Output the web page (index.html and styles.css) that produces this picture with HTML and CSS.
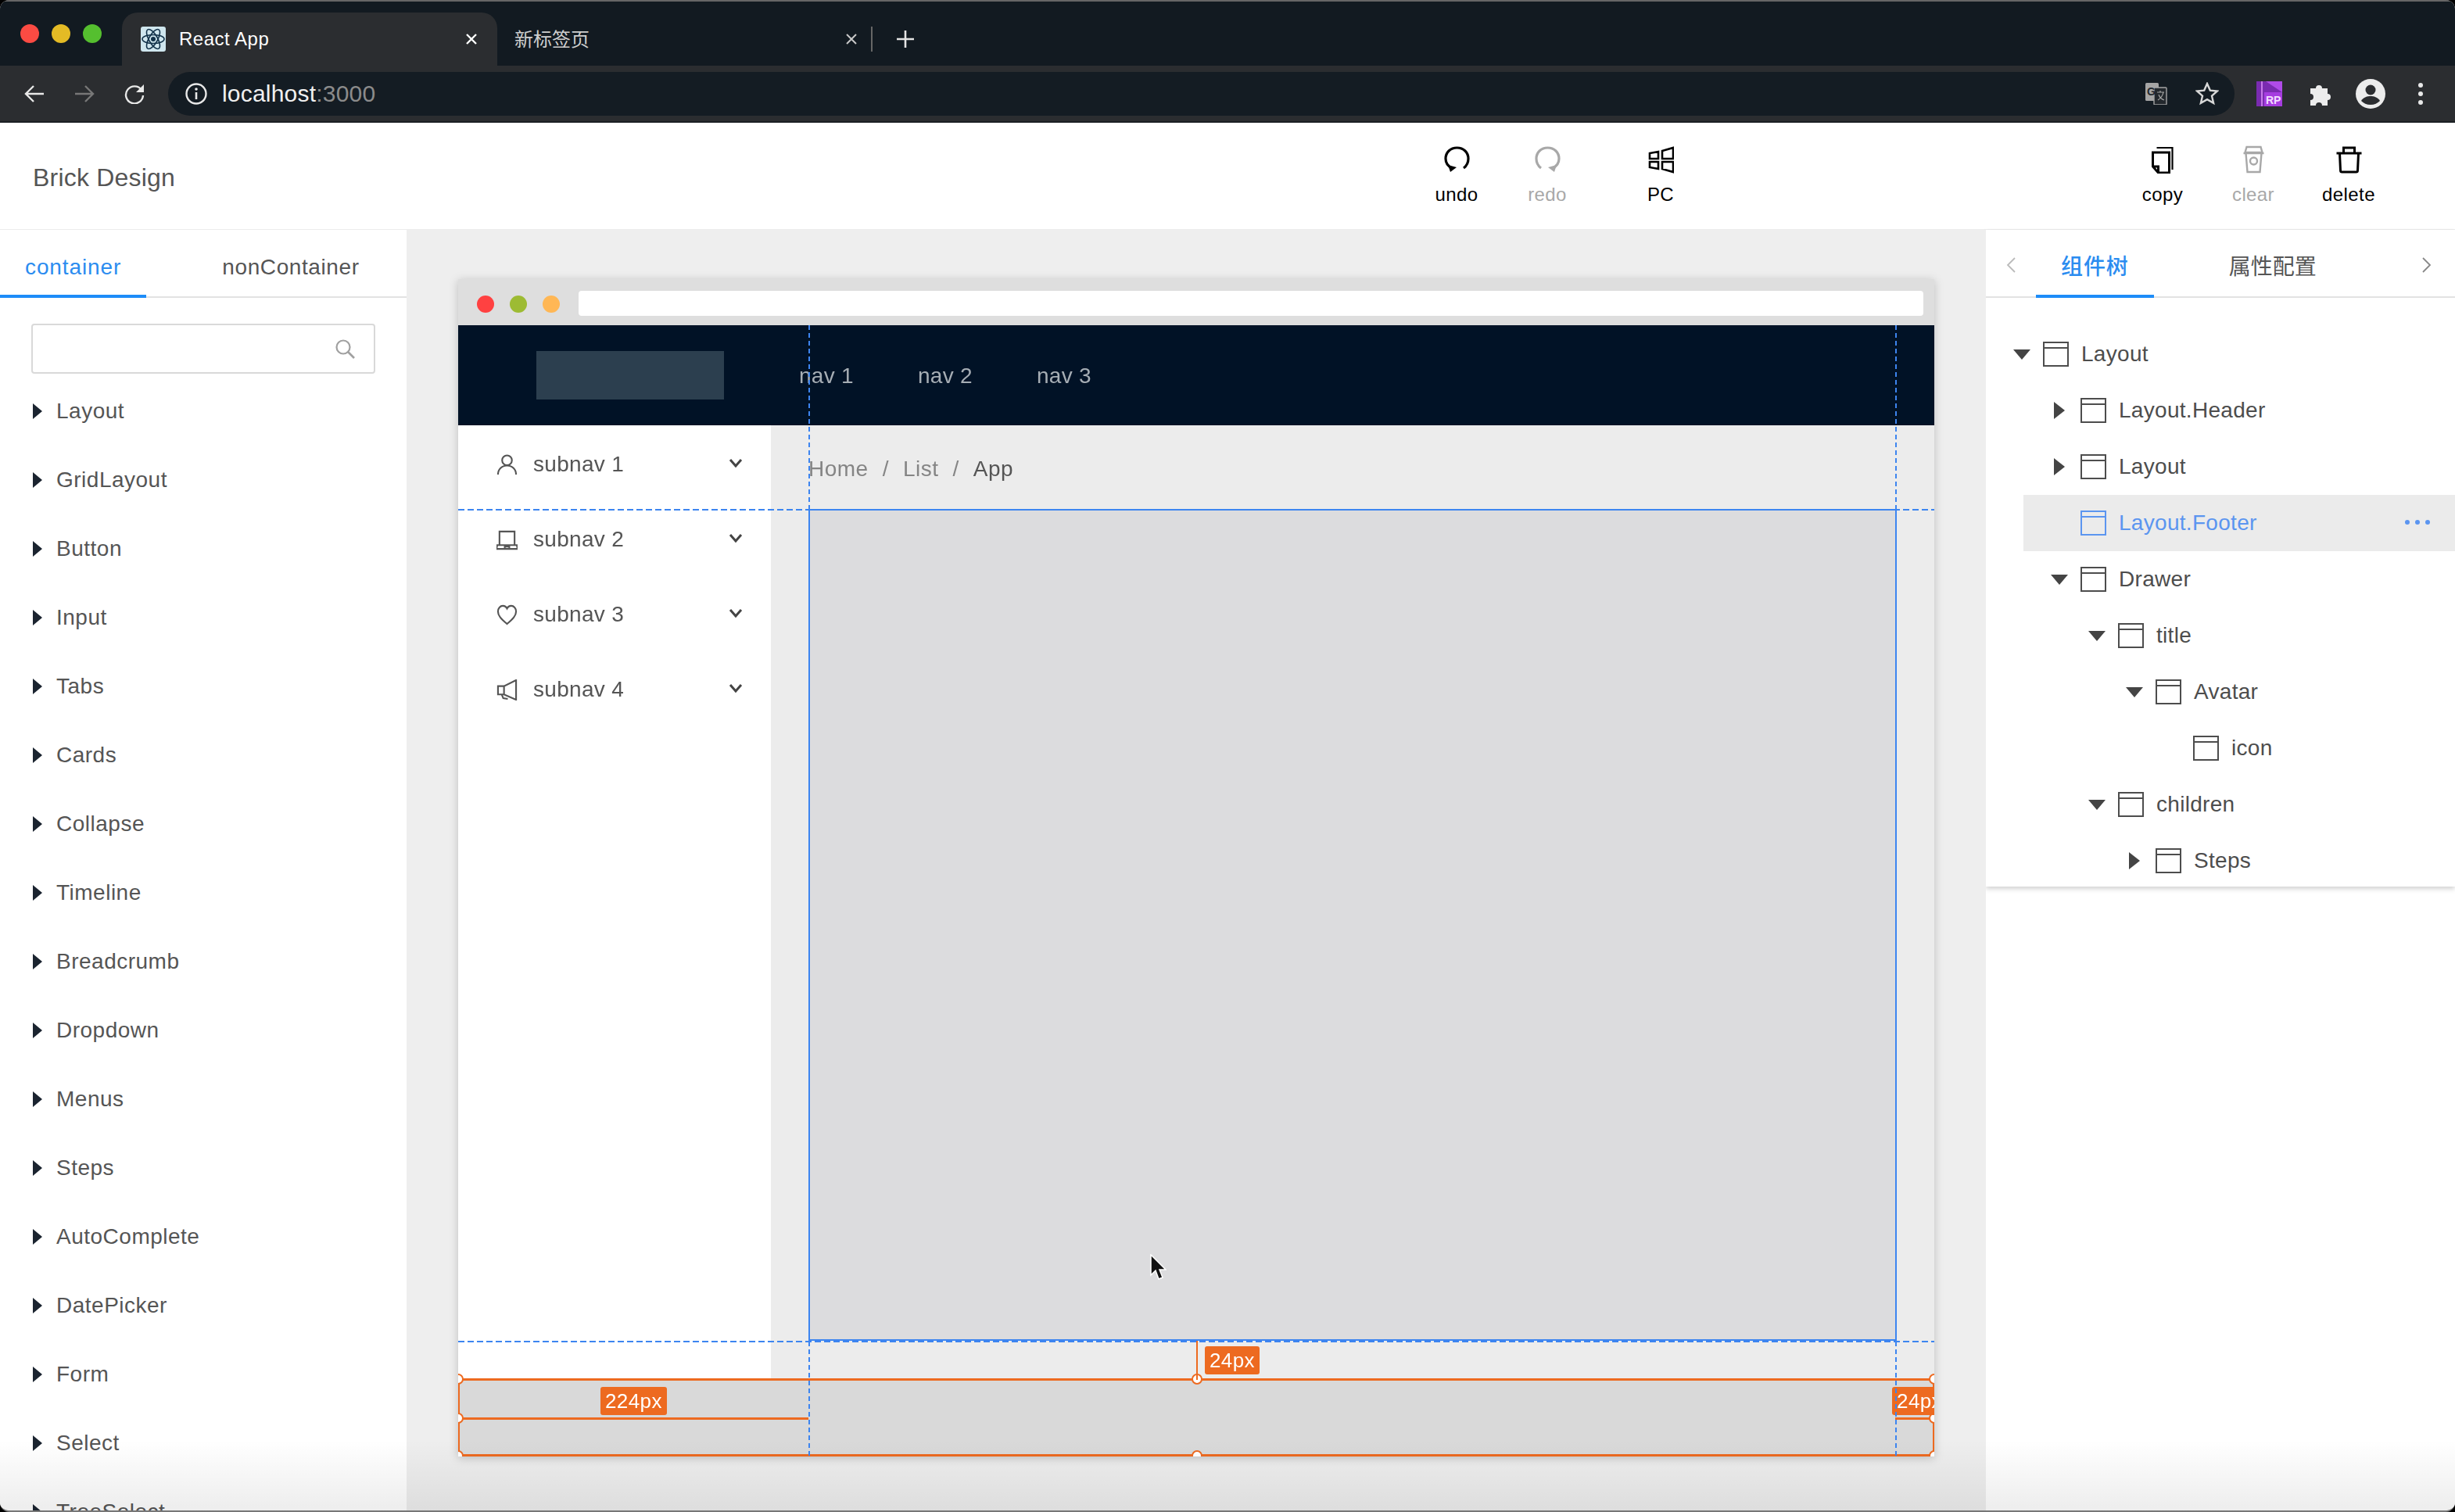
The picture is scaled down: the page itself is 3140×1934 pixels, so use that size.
FILE: index.html
```html
<!DOCTYPE html>
<html lang="en">
<head>
  <meta charset="UTF-8" />
  <title>React App</title>
  <link rel="stylesheet" href="styles.css">
</head>
<body>
  <svg class="defs" width="0" height="0">
    <symbol id="node" viewBox="0 0 33 32">
      <rect x="1" y="1" width="31" height="30" fill="none" stroke="currentColor" stroke-width="2"/>
      <path d="M1 8h31" fill="none" stroke="currentColor" stroke-width="2"/>
    </symbol>
    <symbol id="chev" viewBox="0 0 18 12">
      <path d="M2 2l7 8 7-8" fill="none" stroke="currentColor" stroke-width="3"/>
    </symbol>
  </svg>

  <div class="screen">
    <!-- Browser chrome -->
    <div class="tabstrip">
      <div class="lights">
        <span class="light red"></span>
        <span class="light yellow"></span>
        <span class="light green"></span>
      </div>
      <div class="tab active">
        <svg class="favicon" viewBox="0 0 32 32">
          <rect width="32" height="32" rx="3" fill="#cfe6ee"/>
          <g fill="none" stroke="#12324a" stroke-width="1.6">
            <ellipse cx="16" cy="16" rx="14" ry="5.5"/>
            <ellipse cx="16" cy="16" rx="14" ry="5.5" transform="rotate(60 16 16)"/>
            <ellipse cx="16" cy="16" rx="14" ry="5.5" transform="rotate(120 16 16)"/>
          </g>
          <circle cx="16" cy="16" r="3" fill="#12324a"/>
        </svg>
        <span class="tab-title">React App</span>
        <svg class="tab-close" viewBox="0 0 14 14"><path d="M1 1l12 12M13 1L1 13" stroke="#fff" stroke-width="2.4"/></svg>
      </div>
      <div class="tab">
        <span class="tab-title cjk">新标签页</span>
        <svg class="tab-close" viewBox="0 0 14 14"><path d="M1 1l12 12M13 1L1 13" stroke="#c8c8c8" stroke-width="2"/></svg>
      </div>
      <span class="tab-divider"></span>
      <svg class="tab-plus" viewBox="0 0 22 22"><path d="M11 0v22M0 11h22" stroke="#e4e4e4" stroke-width="2.6"/></svg>
    </div>

    <div class="toolbar">
      <svg class="nav-btn" viewBox="0 0 26 26"><path d="M25 13H3M12 3L2 13l10 10" fill="none" stroke="#e8e8e8" stroke-width="2.4"/></svg>
      <svg class="nav-btn" viewBox="0 0 26 26"><path d="M1 13h22M14 3l10 10-10 10" fill="none" stroke="#777" stroke-width="2.4"/></svg>
      <svg class="nav-btn" viewBox="0 0 26 26"><path d="M22 8a11 11 0 1 0 2 7" fill="none" stroke="#e8e8e8" stroke-width="2.4"/><path d="M25 1v10H15z" fill="#e8e8e8"/></svg>
      <div class="omnibox">
        <svg class="info" viewBox="0 0 28 28">
          <circle cx="14" cy="14" r="12.5" fill="none" stroke="#e8e8e8" stroke-width="2.4"/>
          <path d="M14 12v9" stroke="#e8e8e8" stroke-width="2.6"/>
          <circle cx="14" cy="8" r="1.8" fill="#e8e8e8"/>
        </svg>
        <span class="url">localhost<span class="url-port">:3000</span></span>
        <svg class="translate" viewBox="0 0 28 28">
          <rect x="0" y="0" width="17" height="23" rx="1.5" fill="#a5a5a5"/>
          <rect x="11" y="6" width="16" height="22" rx="1" fill="#23282d" stroke="#a5a5a5" stroke-width="1.4"/>
          <text x="2" y="16" class="translate-g">G</text>
          <path d="M15 12h9M19 10v2M23 12c-1 5-4 8-7 10M17 15c1 3 4 6 7 7" fill="none" stroke="#a5a5a5" stroke-width="1.2"/>
        </svg>
        <svg class="star" viewBox="0 0 30 30"><path d="M15 2l3.8 8.6 9.2.9-7 6.2 2.1 9.2-8.100-4.800-8.100 4.800 2.100-9.200-7-6.200 9.200-.9z" fill="none" stroke="#d8d8d8" stroke-width="2.4"/></svg>
      </div>
      <svg class="ext-rp" viewBox="0 0 33 32">
        <rect width="33" height="32" fill="#7a2bb0"/>
        <rect x="6" y="0" width="2" height="32" fill="#c77ae8"/>
        <path d="M12 0h21v14z" fill="#b04be8"/>
        <rect x="10" y="14" width="23" height="18" fill="#a63ce0"/>
        <text x="12" y="29" class="ext-rp-text">RP</text>
      </svg>
      <svg class="ext-puzzle" viewBox="0 0 30 30">
        <path d="M2 8h7a4 4 0 1 1 8 0h7v7a4 4 0 1 1 0 8v7h-7a4 4 0 0 0-8 0H2v-7a4 4 0 0 0 0-8z" fill="#ececec"/>
      </svg>
      <svg class="avatar" viewBox="0 0 38 38">
        <circle cx="19" cy="19" r="19" fill="#ececec"/>
        <circle cx="19" cy="14" r="6.500" fill="#2b2d30"/>
        <path d="M7 28c3-5 8-6 12-6s9 1 12 6c-3 3-7 5-12 5s-9-2-12-5z" fill="#2b2d30"/>
      </svg>
      <div class="menu-dots"><i></i><i></i><i></i></div>
    </div>

    <!-- App header -->
    <div class="app-header">
      <div class="brand">Brick Design</div>
      <div class="tools">
        <div class="tool">
          <svg class="tool-icon" viewBox="0 0 33 34">
            <path d="M10 28C4 25 2 20 2 16 2 8 8 2 16.500 2S31 8 31 16c0 5-2 9-6 12" fill="none" stroke="currentColor" stroke-width="3.200"/>
            <path d="M5 24l11 3-8 6z" fill="currentColor"/>
          </svg>
          <span>undo</span>
        </div>
        <div class="tool off">
          <svg class="tool-icon" viewBox="0 0 33 34">
            <path d="M23 28c6-3 8-8 8-12 0-8-6-14-14.500-14S2 8 2 16c0 5 2 9 6 12" fill="none" stroke="currentColor" stroke-width="3.200"/>
            <path d="M28 24l-11 3 8 6z" fill="currentColor"/>
          </svg>
          <span>redo</span>
        </div>
        <div class="tool pc">
          <svg class="tool-icon" viewBox="0 0 33 34">
            <path d="M2 9l11-2v9H2zM18 6l14-4v14H18zM2 20h11v9L2 27zM18 20h14v13l-14-4z" fill="none" stroke="currentColor" stroke-width="2.600"/>
          </svg>
          <span>PC</span>
        </div>
      </div>
      <div class="tools right">
        <div class="tool">
          <svg class="tool-icon" viewBox="0 0 30 36">
            <path d="M2 9h21v26H9l-7-8zM2 27h7v8" fill="none" stroke="currentColor" stroke-width="3"/>
            <path d="M7 3h20v28" fill="none" stroke="currentColor" stroke-width="2.200"/>
          </svg>
          <span>copy</span>
        </div>
        <div class="tool off">
          <svg class="tool-icon" viewBox="0 0 30 36">
            <path d="M6 2h18l2 7H4zM2 10h26M5 10l2 24h16l2-24" fill="none" stroke="currentColor" stroke-width="2.400"/>
            <circle cx="15" cy="20" r="4.500" fill="none" stroke="currentColor" stroke-width="2.400"/>
          </svg>
          <span>clear</span>
        </div>
        <div class="tool trash">
          <svg class="tool-icon" viewBox="0 0 32 36">
            <path d="M0 10h32M9 9V3h14v6M4 10l1 22a2 2 0 0 0 2 2h18a2 2 0 0 0 2-2l1-22" fill="none" stroke="currentColor" stroke-width="3"/>
          </svg>
          <span>delete</span>
        </div>
      </div>
    </div>

    <div class="workspace">
      <!-- Left panel -->
      <div class="left-panel">
        <div class="tabs">
          <div class="panel-tab selected">container</div>
          <div class="panel-tab second">nonContainer</div>
        </div>
        <div class="search-wrap">
          <div class="search">
            <svg class="search-icon" viewBox="0 0 26 26"><circle cx="11" cy="11" r="8.500" fill="none" stroke="#a0a0a0" stroke-width="2.200"/><path d="M17 17l8 8" stroke="#a0a0a0" stroke-width="2.600"/></svg>
          </div>
        </div>
        <div class="comp-item">Layout</div>
        <div class="comp-item">GridLayout</div>
        <div class="comp-item">Button</div>
        <div class="comp-item">Input</div>
        <div class="comp-item">Tabs</div>
        <div class="comp-item">Cards</div>
        <div class="comp-item">Collapse</div>
        <div class="comp-item">Timeline</div>
        <div class="comp-item">Breadcrumb</div>
        <div class="comp-item">Dropdown</div>
        <div class="comp-item">Menus</div>
        <div class="comp-item">Steps</div>
        <div class="comp-item">AutoComplete</div>
        <div class="comp-item">DatePicker</div>
        <div class="comp-item">Form</div>
        <div class="comp-item">Select</div>
        <div class="comp-item">TreeSelect</div>
      </div>

      <!-- Canvas -->
      <div class="canvas">
        <div class="preview">
          <div class="preview-bar">
            <span class="dot d-red"></span>
            <span class="dot d-green"></span>
            <span class="dot d-orange"></span>
            <div class="preview-url"></div>
          </div>
          <div class="preview-nav">
            <div class="preview-logo"></div>
            <span class="preview-link">nav 1</span>
            <span class="preview-link">nav 2</span>
            <span class="preview-link">nav 3</span>
          </div>
          <div class="preview-body">
            <div class="sider">
              <div class="sub-item">
                <svg class="sub-icon" viewBox="0 0 28 28"><circle cx="14" cy="8" r="6.500" fill="none" stroke="currentColor" stroke-width="2.200"/><path d="M2 27c0-7 5-12 12-12s12 5 12 12" fill="none" stroke="currentColor" stroke-width="2.200"/></svg>
                <span>subnav 1</span>
                <svg class="sub-arrow"><use href="#chev"/></svg>
              </div>
              <div class="sub-item">
                <svg class="sub-icon" viewBox="0 0 28 28"><path d="M4 3h20v18H4zM1 21h26l1 5H0zM11 26v-3h6v3" fill="none" stroke="currentColor" stroke-width="2.200"/></svg>
                <span>subnav 2</span>
                <svg class="sub-arrow"><use href="#chev"/></svg>
              </div>
              <div class="sub-item">
                <svg class="sub-icon" viewBox="0 0 28 28"><path d="M14 26C6 19 2 15 2 9.500 2 5 5 2 8.500 2c2.500 0 4.500 1.500 5.500 3.500C15 3.500 17 2 19.500 2 23 2 26 5 26 9.500 26 15 22 19 14 26z" fill="none" stroke="currentColor" stroke-width="2.200"/></svg>
                <span>subnav 3</span>
                <svg class="sub-arrow"><use href="#chev"/></svg>
              </div>
              <div class="sub-item">
                <svg class="sub-icon" viewBox="0 0 28 28"><path d="M26 1v26L10 20H2V9h8zM10 9v11M7 20l2 5 6 1" fill="none" stroke="currentColor" stroke-width="2.200"/></svg>
                <span>subnav 4</span>
                <svg class="sub-arrow"><use href="#chev"/></svg>
              </div>
            </div>
            <div class="content">
              <div class="crumbs">
                <span>Home</span><span class="sep">/</span><span>List</span><span class="sep">/</span><span class="crumb-now">App</span>
              </div>
              <div class="content-inner"></div>
            </div>
          </div>
          <div class="footer-box">
            <span class="measure-line left"></span>
            <span class="measure-line right"></span>
            <span class="handle h-tl"></span>
            <span class="handle h-ml"></span>
            <span class="handle h-bl"></span>
            <span class="handle h-tm"></span>
            <span class="handle h-bm"></span>
            <span class="handle h-tr"></span>
            <span class="handle h-mr"></span>
            <span class="handle h-br"></span>
            <span class="badge b-left">224px</span>
            <span class="badge b-right">24px</span>
          </div>
          <!-- selection overlay -->
          <span class="guide-h g-top"></span>
          <span class="guide-h g-bottom"></span>
          <span class="guide-v g-left"></span>
          <span class="guide-v g-right"></span>
          <span class="measure-up"></span>
          <span class="badge b-top">24px</span>
        </div>
        <svg class="cursor" viewBox="0 0 22 34"><path d="M2 1v26l6-6 4 11 5-2-4-10h8z" fill="#111" stroke="#fff" stroke-width="1.500"/></svg>
      </div>

      <!-- Right panel -->
      <div class="right-panel">
        <div class="tree-card">
          <div class="tabs right-tabs">
            <svg class="tab-chev" viewBox="0 0 12 20"><path d="M11 1L2 10l9 9" fill="none" stroke="#bbb" stroke-width="1.800"/></svg>
            <div class="panel-tab selected cjk-tab">组件树</div>
            <div class="panel-tab second-cjk cjk-tab">属性配置</div>
            <svg class="tab-chev end" viewBox="0 0 12 20"><path d="M1 1l9 9-9 9" fill="none" stroke="#888" stroke-width="1.800"/></svg>
          </div>
          <div class="tree">
            <div class="tree-row d0"><i class="sw down"></i><svg class="node"><use href="#node"/></svg><span>Layout</span></div>
            <div class="tree-row d1"><i class="sw side"></i><svg class="node"><use href="#node"/></svg><span>Layout.Header</span></div>
            <div class="tree-row d1"><i class="sw side"></i><svg class="node"><use href="#node"/></svg><span>Layout</span></div>
            <div class="tree-row d1 current"><i class="sw"></i><svg class="node"><use href="#node"/></svg><span>Layout.Footer</span><div class="more"><i></i><i></i><i></i></div></div>
            <div class="tree-row d1"><i class="sw down"></i><svg class="node"><use href="#node"/></svg><span>Drawer</span></div>
            <div class="tree-row d2"><i class="sw down"></i><svg class="node"><use href="#node"/></svg><span>title</span></div>
            <div class="tree-row d3"><i class="sw down"></i><svg class="node"><use href="#node"/></svg><span>Avatar</span></div>
            <div class="tree-row d4"><i class="sw"></i><svg class="node"><use href="#node"/></svg><span>icon</span></div>
            <div class="tree-row d2"><i class="sw down"></i><svg class="node"><use href="#node"/></svg><span>children</span></div>
            <div class="tree-row d3"><i class="sw side"></i><svg class="node"><use href="#node"/></svg><span>Steps</span></div>
          </div>
        </div>
      </div>
      <div class="bottom-fade"></div>
    </div>
  </div>
</body>
</html>
```

FILE: styles.css
```css
* {
  box-sizing: border-box;
}

html, body {
  margin: 0;
  padding: 0;
  background: #000;
}

body {
  width: 3140px;
  height: 1934px;
  overflow: hidden;
  font-family: "Liberation Sans", "Noto Sans CJK SC", sans-serif;
}

.defs {
  position: absolute;
}

.screen {
  height: 1934px;
  display: flex;
  flex-direction: column;
  border-radius: 12px;
  overflow: hidden;
  background: #fff;
  border-bottom: 2px solid #777;
}

/* browser chrome */
.tabstrip {
  height: 84px;
  padding-top: 14px;
  background: #121a21;
  border-top: 2px solid #666;
  display: flex;
  position: relative;
}

.lights {
  width: 156px;
  display: flex;
  gap: 16px;
  padding: 15px 0 0 26px;
}

.light {
  width: 24px;
  height: 24px;
  border-radius: 50%;
}

.red { background: #fb4b43; }
.yellow { background: #e4bb25; }
.green { background: #55bf2f; }

.tab {
  width: 480px;
  height: 68px;
  border-radius: 20px 20px 0 0;
  display: flex;
  align-items: center;
  padding: 0 22px;
  color: #fff;
  font-size: 24px;
  letter-spacing: 0.5px;
}

.tab.active {
  background: #2b2d30;
}

.tab.active + .tab {
  padding-right: 16px;
  color: #cfcfcf;
}

.tab-title.cjk {
  margin-top: -3px;
  letter-spacing: 0;
}

.favicon {
  width: 32px;
  height: 32px;
  margin: 0 17px 0 2px;
}

.tab-title {
  flex: 1;
}

.tab-close {
  width: 14px;
  height: 14px;
  margin-right: 4px;
}

.tab-divider {
  width: 2px;
  height: 32px;
  margin: 18px 0 0 -2px;
  background: #666;
}

.tab-plus {
  width: 22px;
  height: 22px;
  margin: 23px 0 0 31px;
}

.toolbar {
  height: 73px;
  background: #2b2d30;
  border-bottom: 2px solid #1b1f23;
  display: flex;
  align-items: center;
  padding-left: 31px;
}

.nav-btn {
  width: 26px;
  height: 26px;
  margin-right: 38px;
  flex: none;
}

.omnibox {
  width: 2643px;
  height: 56px;
  margin-left: -8px;
  border-radius: 28px;
  background: #141c23;
  display: flex;
  align-items: center;
  padding-left: 22px;
  flex: none;
}

.info {
  width: 28px;
  height: 28px;
}

.url {
  margin-left: 19px;
  flex: 1;
  font-size: 30px;
  letter-spacing: 0.2px;
  color: #f0f0f0;
}

.url-port {
  color: #8b8b8b;
}

.translate {
  width: 28px;
  height: 28px;
  margin-right: 36px;
}

.translate-g {
  font-size: 14px;
  font-weight: bold;
  fill: #23282d;
}

.star {
  width: 30px;
  height: 30px;
  margin-right: 20px;
}

.ext-rp {
  width: 33px;
  height: 32px;
  margin-left: 28px;
  flex: none;
}

.ext-rp-text {
  font-size: 14px;
  font-weight: bold;
  fill: #f3dcff;
}

.ext-puzzle {
  width: 30px;
  height: 30px;
  margin-left: 34px;
  flex: none;
}

.avatar {
  width: 38px;
  height: 38px;
  margin-left: 30px;
  flex: none;
}

.menu-dots {
  margin-left: 42px;
  display: flex;
  flex-direction: column;
  gap: 5px;
}

.menu-dots i {
  display: block;
  width: 6px;
  height: 6px;
  border-radius: 50%;
  background: #e8e8e8;
}

/* app header */
.app-header {
  height: 137px;
  flex: none;
  display: flex;
  background: #fff;
  padding-right: 78px;
  border-bottom: 1px solid #ececec;
}

.brand {
  width: 1805px;
  padding: 50px 0 0 42px;
  font-size: 32px;
  line-height: 40px;
  letter-spacing: 0.2px;
  color: #555;
}

.tools {
  display: flex;
}

.tools.right {
  margin-left: auto;
}

.tool {
  width: 116px;
  padding-top: 29px;
  display: flex;
  flex-direction: column;
  align-items: center;
  color: #000;
  font-size: 24px;
  line-height: 28px;
  letter-spacing: 0.4px;
}

.tool span {
  margin-top: 13px;
}

.tool.off {
  color: #a8a8a8;
}

.tool.pc {
  margin-left: 29px;
}

.tool.trash {
  margin-left: 6px;
}

.tool-icon {
  width: 33px;
  height: 36px;
  display: block;
}

/* layout below the header */
.workspace {
  flex: 1;
  display: flex;
  position: relative;
  min-height: 0;
}

.left-panel {
  width: 520px;
  background: #fff;
  overflow: hidden;
  flex: none;
}

.tabs {
  height: 87px;
  display: flex;
  border-bottom: 2px solid #e2e2e2;
}

.panel-tab {
  height: 87px;
  padding: 6px 32px 0;
  line-height: 84px;
  font-size: 28px;
  letter-spacing: 0.6px;
  color: #555;
}

.panel-tab.selected {
  color: #2b8cf0;
  border-bottom: 4px solid #1d8cf8;
  font-weight: 500;
  letter-spacing: 0.9px;
}

.panel-tab.second {
  margin-left: 65px;
}

.search-wrap {
  padding: 33px 40px 4px;
}

.search {
  height: 64px;
  border: 2px solid #d9d9d9;
  border-radius: 4px;
  display: flex;
  align-items: center;
  justify-content: flex-end;
  padding-right: 24px;
}

.search-icon {
  width: 26px;
  height: 26px;
}

.comp-item {
  height: 88px;
  display: flex;
  align-items: center;
  padding-left: 42px;
  font-size: 28px;
  letter-spacing: 0.5px;
  color: #555;
}

.comp-item::before {
  content: "";
  width: 0;
  height: 0;
  margin-right: 18px;
  border-left: 12px solid #1b2430;
  border-top: 10px solid transparent;
  border-bottom: 10px solid transparent;
}

/* canvas and preview */
.canvas {
  flex: 1;
  background: #eee;
  padding: 63px 66px 0;
  position: relative;
}

.preview {
  width: 1888px;
  height: 1506px;
  position: relative;
  overflow: hidden;
  display: flex;
  flex-direction: column;
  background: #fff;
  filter: drop-shadow(0 2px 6px rgba(0, 0, 0, 0.2));
}

.preview-bar {
  height: 59px;
  flex: none;
  background: #dedede;
  display: flex;
  align-items: center;
  padding: 5px 14px 0 24px;
}

.dot {
  width: 22px;
  height: 22px;
  border-radius: 50%;
  margin-right: 20px;
}

.d-red { background: #ff4141; }
.d-green { background: #9dbb33; }
.d-orange { background: #ffb755; margin-right: 24px; }

.preview-url {
  flex: 1;
  height: 32px;
  margin-top: -2px;
  border-radius: 4px;
  background: #fff;
}

.preview-nav {
  height: 128px;
  flex: none;
  background: #011226;
  display: flex;
  align-items: center;
  padding-left: 100px;
}

.preview-logo {
  width: 240px;
  height: 62px;
  margin-right: 96px;
  background: #2c3f4f;
}

.preview-link {
  margin-right: 82px;
  padding-top: 2px;
  font-size: 28px;
  letter-spacing: 0.3px;
  color: #a6adb4;
}

.preview-body {
  flex: 1;
  display: flex;
  min-height: 0;
}

.sider {
  width: 400px;
  background: #fff;
  padding-top: 10px;
  flex: none;
}

.sub-item {
  height: 80px;
  margin-bottom: 16px;
  display: flex;
  align-items: center;
  padding: 0 36px 0 49px;
  color: #555;
  font-size: 28px;
  letter-spacing: 0.3px;
}

.sub-item span {
  flex: 1;
  margin-left: 20px;
}

.sub-icon {
  width: 27px;
  height: 27px;
}

.sub-arrow {
  width: 18px;
  height: 12px;
  color: #444;
  margin-bottom: 4px;
}

.content {
  flex: 1;
  background: #ececec;
  padding: 0 48px 48px;
  display: flex;
  flex-direction: column;
  min-width: 0;
}

.crumbs {
  height: 107px;
  padding-top: 5px;
  display: flex;
  align-items: center;
  font-size: 28px;
  letter-spacing: 0.5px;
  color: #858585;
}

.sep {
  margin: 0 18px;
}

.crumb-now {
  color: #555;
}

.content-inner {
  flex: 1;
  background: #dcdcde;
  border: 2px solid #3d85f0;
}

.footer-box {
  height: 100px;
  flex: none;
  background: #d9d9d9;
  border: 2px solid #ed6a20;
  border-width: 3px 2px;
  position: relative;
}

.measure-line {
  position: absolute;
  top: 47px;
  height: 3px;
  background: #ed6a20;
}

.measure-line.left {
  left: 0;
  width: 446px;
}

.measure-line.right {
  right: 0;
  width: 48px;
}

.handle {
  position: absolute;
  width: 14px;
  height: 14px;
  border-radius: 50%;
  background: #fff;
  border: 2px solid #ed6a20;
}

.h-tl { left: -9px; top: -9px; }
.h-ml { left: -9px; top: 41px; }
.h-bl { left: -9px; bottom: -9px; }
.h-tm { left: 936px; top: -9px; }
.h-bm { left: 936px; bottom: -9px; }
.h-tr { right: -9px; top: -9px; }
.h-mr { right: -9px; top: 41px; }
.h-br { right: -9px; bottom: -9px; }

.badge {
  position: absolute;
  height: 36px;
  padding: 0 6px;
  background: #ed6a20;
  color: #fff;
  border-radius: 3px;
  font-size: 26px;
  line-height: 36px;
  letter-spacing: 0.4px;
}

.b-left {
  left: 180px;
  top: 8px;
}

.b-right {
  right: -18px;
  top: 8px;
}

.b-top {
  left: 955px;
  top: 1365px;
}

.measure-up {
  position: absolute;
  left: 944px;
  top: 1358px;
  width: 2px;
  height: 50px;
  background: #ed6a20;
}

.guide-h {
  position: absolute;
  left: 0;
  right: 0;
  height: 2px;
  background: repeating-linear-gradient(90deg, #3d85f0 0 8px, transparent 8px 12px);
}

.g-top { top: 294px; }
.g-bottom { top: 1358px; }

.guide-v {
  position: absolute;
  top: 59px;
  bottom: 0;
  width: 2px;
  background: repeating-linear-gradient(180deg, #3d85f0 0 6px, transparent 6px 10px);
}

.g-left { left: 448px; }
.g-right { left: 1838px; }

.cursor {
  position: absolute;
  left: 950px;
  top: 1310px;
  width: 22px;
  height: 34px;
}

/* right panel */
.right-panel {
  width: 600px;
  background: #fff;
  flex: none;
}

.tree-card {
  height: 840px;
  box-shadow: 0 3px 6px rgba(0, 0, 0, 0.18);
}

.right-tabs {
  align-items: center;
  padding-left: 26px;
}

.tab-chev {
  width: 12px;
  height: 20px;
  margin: 4px 26px 0 0;
}

.tab-chev.end {
  margin: 4px 30px 0 auto;
}

.cjk-tab {
  letter-spacing: 0;
  align-self: flex-start;
}

.second-cjk {
  margin-left: 64px;
}

.tree {
  padding-top: 36px;
}

.tree-row {
  height: 72px;
  display: flex;
  align-items: center;
  font-size: 28px;
  color: #4d4d4d;
  letter-spacing: 0.3px;
  position: relative;
}

.d0 { padding-left: 22px; }
.d1 { padding-left: 70px; }
.d2 { padding-left: 118px; }
.d3 { padding-left: 166px; }
.d4 { padding-left: 214px; }

.tree-row.current {
  color: #5b95f0;
  background: linear-gradient(#ebebeb, #ebebeb) 48px 0 no-repeat;
}

.sw {
  width: 48px;
  height: 22px;
  flex: none;
  display: flex;
  align-items: center;
  justify-content: center;
}

.sw.down::before {
  content: "";
  border-top: 13px solid #444;
  border-left: 11px solid transparent;
  border-right: 11px solid transparent;
}

.sw.side::before {
  content: "";
  border-left: 14px solid #444;
  border-top: 11px solid transparent;
  border-bottom: 11px solid transparent;
}

.node {
  width: 33px;
  height: 32px;
  margin: 0 16px 0 3px;
  flex: none;
}

.more {
  position: absolute;
  right: 32px;
  top: 32px;
  display: flex;
  gap: 7px;
}

.more i {
  display: block;
  width: 6px;
  height: 6px;
  border-radius: 50%;
  background: #5b95f0;
}

.bottom-fade {
  position: absolute;
  left: 0;
  right: 0;
  bottom: 0;
  height: 90px;
  background: linear-gradient(rgba(0, 0, 0, 0), rgba(0, 0, 0, 0.07));
  pointer-events: none;
}
```
